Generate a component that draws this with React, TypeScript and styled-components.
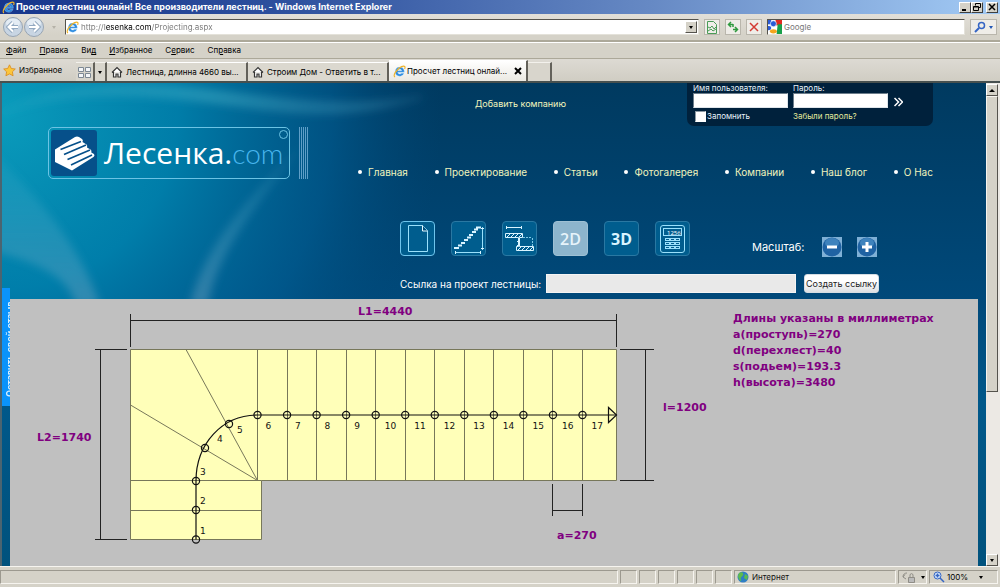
import React from "react";
import styled, { createGlobalStyle, css } from "styled-components";

const ui = 'Inter, "Liberation Sans", sans-serif';
const wide = '"DejaVu Sans", sans-serif';

const GlobalStyle = createGlobalStyle`
  * { box-sizing: border-box; }
  body { margin: 0; background: #d5d2c8; font-family: ${ui}; font-size: 8px; color: #111; }
  button, input { font: inherit; margin: 0; }
  button { cursor: pointer; }
  svg { flex: none; }
`;

/* ---------- browser frame ---------- */

const Window = styled.div`
  display: flex;
  flex-direction: column;
  min-height: 100vh;
`;

const TitleBar = styled.header`
  display: flex;
  align-items: center;
  gap: 1px;
  height: 14px;
  padding: 0 2px;
  background: linear-gradient(90deg, #17368c 0%, #2f529f 30%, #6689c4 65%, #a3cbf5 100%);
  color: #fff;
`;

const Title = styled.h1`
  flex: 1;
  margin: 0;
  font-size: 9px;
  line-height: 14px;
  font-weight: bold;
  white-space: nowrap;
`;

const CaptionButton = styled.button<{ $gap?: boolean }>`
  display: grid;
  place-items: center;
  width: 12px;
  height: 11px;
  margin-left: ${(p) => (p.$gap ? 2 : -1)}px;
  padding: 0;
  border: 1px solid;
  border-color: #fff #404040 #404040 #fff;
  background: #d5d2c8;
`;

const Bar = styled.div<{ $h: number }>`
  display: flex;
  align-items: center;
  height: ${(p) => p.$h}px;
  border-bottom: 1px solid #aca899;
  box-shadow: 0 1px 0 #fff;
`;

const AddressBar = styled(Bar)`
  padding: 0 3px 0 2px;
  gap: 5px;
  border-bottom-width: 2px;
  background: linear-gradient(#e2dfd8, #d5d2c8 80%);
`;

const RoundButton = styled.button`
  width: 22px;
  height: 22px;
  margin-right: -6px;
  padding: 0;
  border: 0;
  background: none;
`;

const DropMark = styled.span`
  width: 0;
  height: 0;
  border: 2px solid transparent;
  border-top: 3px solid currentColor;
  border-bottom: 0;
`;

const History = styled.button`
  display: grid;
  place-items: center;
  width: 12px;
  height: 12px;
  margin-left: 4px;
  padding: 0;
  border: 0;
  background: none;
  color: #b5b2a8;
`;

const Field = styled.div<{ $grow?: boolean }>`
  display: flex;
  align-items: center;
  gap: 2px;
  ${(p) => (p.$grow ? "flex: 1;" : "width: 198px;")}
  min-width: 0;
  height: 16px;
  padding: 0 1px 0 0;
  border: 1px solid;
  border-color: #55534d #e4e2da #e4e2da #55534d;
  background: #fff;
`;

const Address = styled.input`
  flex: 1;
  min-width: 0;
  padding: 0;
  border: 0;
  outline: 0;
  line-height: 14px;
  background: linear-gradient(90deg, #777 24px, #000 24px, #000 71px, #777 71px);
  background-clip: text;
  -webkit-background-clip: text;
  -webkit-text-fill-color: transparent;
`;

const Search = styled.input`
  flex: 1;
  min-width: 0;
  padding: 0;
  border: 0;
  outline: 0;
  background: none;
  &::placeholder { color: #777; opacity: 1; }
`;

const ArrowButton = styled.button`
  display: grid;
  place-items: center;
  width: 12px;
  height: 12px;
  padding: 0;
  border: 1px solid;
  border-color: #fff #55534d #55534d #fff;
  background: #d5d2c8;
  color: #000;
`;

const IconButton = styled.button<{ $w?: number }>`
  display: flex;
  align-items: center;
  justify-content: space-evenly;
  width: ${(p) => p.$w ?? 16}px;
  height: 16px;
  padding: 0;
  border: 1px solid #b9b6ac;
  background: #efede8;
  color: #2257b5;
`;

const MenuBar = styled(Bar)`
  gap: 13px;
  padding-left: 6px;
`;

const MenuItem = styled.button`
  padding: 0;
  border: 0;
  background: none;
  line-height: 14px;
  color: #000;
`;

const TabBar = styled.div`
  display: flex;
  align-items: flex-end;
  height: 24px;
  padding-left: 3px;
  border-bottom: 2px solid #47504f;
  background: linear-gradient(#dddad3, #d0cdc3);
`;

const Favorites = styled.button`
  display: flex;
  align-items: center;
  gap: 3px;
  align-self: center;
  width: 73px;
  padding: 0;
  border: 0;
  background: none;
  color: #000;
  white-space: nowrap;
`;

const SmallTab = styled.button<{ $w: number }>`
  display: grid;
  place-items: center;
  width: ${(p) => p.$w}px;
  height: 19px;
  padding: 0;
  border: 0;
  border-top: 1px solid #f3f1ec;
  border-right: 2px solid #63615a;
  background: #d8d5cc;
  color: #000;
`;

const Tab = styled.button<{ $active?: boolean }>`
  display: flex;
  align-items: center;
  gap: ${(p) => (p.$active ? 1 : 3)}px;
  width: ${(p) => (p.$active ? 139 : 141)}px;
  height: ${(p) => (p.$active ? 21 : 19)}px;
  padding: 0 4px;
  border: 0;
  border-top: 1px solid #fff;
  border-right: 2px solid #63615a;
  background: ${(p) => (p.$active ? "linear-gradient(#fff, #ebe9e2)" : "#dbd8cf")};
  color: #000;
  white-space: nowrap;
`;

const TabTitle = styled.span`
  flex: 1;
  text-align: left;
`;

/* ---------- page ---------- */

const Viewport = styled.div`
  display: flex;
  flex: 1;
  border-left: 2px solid #4b6470;
`;

const Page = styled.main`
  position: relative;
  display: flex;
  flex-direction: column;
  flex: 1;
  min-width: 0;
  padding: 0 8px;
  background: linear-gradient(#003a60 0, #00497a 216px, #00588a 320px, #00527d);
`;

const Backdrop = styled.svg`
  position: absolute;
  top: 0;
  left: 0;
  width: 100%;
  height: 216px;
`;

const FeedbackTab = styled.a`
  position: absolute;
  left: 0;
  top: 205px;
  width: 8px;
  height: 118px;
  padding: 0 0 9px 2px;
  overflow: hidden;
  background: #0a93fb;
  color: #d8efff;
  text-decoration: none;
`;

const FeedbackText = styled.span`
  display: block;
  height: 109px;
  width: 12px;
  writing-mode: vertical-rl;
  transform: rotate(180deg);
  font-size: 9px;
  line-height: 12px;
  font-weight: bold;
  white-space: nowrap;
`;

const SiteHeader = styled.header`
  position: relative;
  display: flex;
  height: 216px;
  padding: 0 45px 0 38px;
`;

const Brand = styled.a`
  display: flex;
  flex: none;
  gap: 9px;
  width: 310px;
  height: 52px;
  margin-top: 44px;
  color: #fff;
  text-decoration: none;
`;

const LogoBox = styled.span`
  position: relative;
  display: flex;
  align-items: center;
  gap: 7px;
  width: 242px;
  padding-left: 2px;
  border: 1px solid #6cc3e4;
  border-radius: 5px;
  white-space: nowrap;
`;

const LogoName = styled.span`
  font-family: "Open Sans", sans-serif;
  font-size: 30px;
  line-height: 48px;
`;

const LogoDomain = styled.span`
  font-family: Lato, sans-serif;
  font-weight: 300;
  font-size: 28px;
  color: #49b6ee;
`;

const LogoRing = styled.span`
  position: absolute;
  top: 2px;
  right: 1px;
  width: 9px;
  height: 9px;
  border: 1px solid #6cc3e4;
  border-radius: 50%;
`;

const LogoStripes = styled.span`
  width: 9px;
  background: repeating-linear-gradient(90deg, #5f9fc8 0 1px, transparent 1px 2px);
`;

const HeaderMain = styled.div`
  display: flex;
  flex-direction: column;
  flex: 1;
  min-width: 0;
`;

const TopRow = styled.div`
  display: flex;
  align-items: flex-start;
  justify-content: space-between;
  padding-left: 117px;
`;

const AddCompany = styled.a`
  margin-top: 14px;
  color: #f2f5bd;
  font-size: 9px;
  line-height: 14px;
  text-decoration: none;
`;

const Login = styled.form`
  display: grid;
  grid-template-columns: 95px 95px 10px;
  column-gap: 5px;
  width: 246px;
  height: 43px;
  padding: 0 6px;
  align-content: start;
  border-radius: 0 0 7px 7px;
  background: #00213c;
  color: #e8f2fa;
`;

const LoginLabel = styled.label`
  line-height: 10px;
  white-space: nowrap;
`;

const LoginInput = styled.input`
  grid-row: 2;
  width: 95px;
  height: 15px;
  padding: 0 2px;
  border: 1px solid;
  border-color: #6b7d8b #dfe5ea #dfe5ea #6b7d8b;
  background: #fff;
`;

const LoginSubmit = styled.button`
  grid-row: 2;
  grid-column: 3;
  display: grid;
  place-items: end center;
  padding: 0;
  border: 0;
  background: none;
  color: #fff;
`;

const Remember = styled.label`
  grid-row: 3;
  display: flex;
  align-items: center;
  gap: 1px;
  padding-left: 2px;
  line-height: 16px;
`;

const Check = styled.input`
  appearance: none;
  width: 11px;
  height: 11px;
  border: 1px solid;
  border-color: #8c99a3 #fff #fff #8c99a3;
  background: #fff;
`;

const Forgot = styled.a`
  grid-row: 3;
  color: #e3ea9c;
  line-height: 16px;
  text-decoration: none;
`;

const Nav = styled.ul`
  display: flex;
  justify-content: space-between;
  margin: 38px 0 0;
  padding: 0;
  list-style: none;
`;

const NavItem = styled.li`
  display: flex;
  align-items: center;
  gap: 6px;
  white-space: nowrap;
  &::before {
    content: "";
    width: 4px;
    height: 4px;
    border-radius: 50%;
    background: #fff;
  }
`;

const NavLink = styled.a`
  color: #f0f4bd;
  font-size: 10px;
  line-height: 16px;
  text-decoration: none;
`;

const ToolRow = styled.div`
  display: flex;
  align-items: center;
  gap: 16px;
  margin-top: 40px;
  padding-left: 42px;
`;

const Tool = styled.button<{ $tone?: "bright" | "active" }>`
  display: grid;
  place-items: center;
  flex: none;
  width: 35px;
  height: 35px;
  padding: 0;
  border: 1px solid #2a78a2;
  border-radius: 4px;
  background: #005d8e;
  color: #d9f4ff;
  font-family: "Open Sans", sans-serif;
  font-size: 16px;
  font-weight: bold;
  ${(p) => p.$tone === "bright" && css`border: 1px solid #6fc4ec;`}
  ${(p) => p.$tone === "active" && css`
    border-color: #9ec0d4;
    background: #8db5cd;
    color: #e6f3fa;
    font-weight: 600;
  `}
`;

const Scale = styled.div`
  display: flex;
  align-items: center;
  gap: 15px;
  margin: 17px 0 0 46px;
  color: #fff;
`;

const ScaleLabel = styled.span`
  width: 55px;
  font-size: 11px;
`;

const ZoomButton = styled.button`
  width: 20px;
  height: 20px;
  padding: 0;
  border: 0;
  background: #7fb0d6;
`;

const LinkRow = styled.form`
  display: flex;
  align-items: center;
  gap: 4px;
  margin: 17px 0 0;
  padding-left: 42px;
`;

const LinkLabel = styled.label`
  width: 142px;
  color: #fff;
  font-size: 10px;
  white-space: nowrap;
`;

const LinkInput = styled.input`
  width: 250px;
  height: 19px;
  margin-right: 4px;
  border: 1px solid #f4f4f4;
  background: #e9e9e9;
`;

const CreateLink = styled.button`
  width: 75px;
  height: 19px;
  padding: 0;
  border: 1px solid #d5dde3;
  border-radius: 3px;
  background: linear-gradient(#fff 40%, #dcdfe2);
  color: #222;
  font-size: 9px;
  white-space: nowrap;
`;

const Canvas = styled.section`
  position: relative;
  display: flex;
  align-items: flex-start;
  flex: 1;
  background: #c0c0c0;
`;

const Drawing = styled.svg`
  flex: none;
  width: 723px;
  height: 267px;
  font-family: ${wide};
`;

const Legend = styled.div`
  margin-top: 12px;
  color: #800080;
  font-family: ${wide};
  font-size: 11px;
  line-height: 16px;
  font-weight: bold;
  white-space: nowrap;
`;

const Scrollbar = styled.div`
  display: flex;
  flex-direction: column;
  width: 14px;
  padding: 1px 2px 0 0;
  background: #ece9e4;
`;

const Thumb = styled.div`
  height: 296px;
  border: 1px solid;
  border-color: #f6f4ef #55534d #55534d #f6f4ef;
  background: #d5d2c8;
`;

const Track = styled.div`
  flex: 1;
`;

/* ---------- status bar ---------- */

const StatusBar = styled.footer`
  display: flex;
  align-items: stretch;
  gap: 2px;
  height: 21px;
  padding: 3px 2px 3px 0;
  border-top: 1px solid #f6f4ef;
`;

const Cell = styled.div<{ $w?: number }>`
  display: flex;
  align-items: center;
  gap: 3px;
  ${(p) => (p.$w ? `width: ${p.$w}px;` : "flex: 1;")}
  padding: 0 2px;
  border: 1px solid;
  border-color: #9c998f #f6f4ef #f6f4ef #9c998f;
  white-space: nowrap;
`;

const CellButton = styled.button`
  display: flex;
  flex: 1;
  align-items: center;
  gap: 2px;
  padding: 0 12px 0 1px;
  border: 0;
  background: none;
  color: #000;
`;

const LockButton = styled(CellButton)`
  gap: 6px;
  padding-right: 2px;
`;

const CellText = styled.span`
  flex: 1;
  text-align: left;
`;

/* ---------- icons ---------- */

const ExplorerIcon = () => (
  <svg width="13" height="13" viewBox="0 0 16 16" aria-hidden="true">
    <path
      d="M8.300 2.600a5.600 5.600 0 1 0 5.300 7.700h-3.100c-1.200 1.500-4.600 1.200-4.700-1.300h8.100c.3-3.600-2-6.400-5.600-6.400zM5.900 7.100c.3-2.400 4.500-2.400 4.800 0z"
      fill="#2d8be0" stroke="#bfe6ff" strokeWidth=".4" fillRule="evenodd" />
    <path d="M2.500 14.800C-.8 13.500 4 5 10.500 2c4-1.600 5 .2 3.800 2.800" fill="none" stroke="#f0b429" strokeWidth="1.400" />
  </svg>
);

const Round = ({ flip }: { flip?: boolean }) => {
  const arrow = flip ? "M6 11h9M11 6.500l4.500 4.500-4.500 4.500" : "M16 11H7M11 6.500L6.500 11l4.500 4.500";
  return (
    <svg width="22" height="22" viewBox="0 0 22 22" aria-hidden="true">
      <circle cx="11" cy="11" r="9.500" fill="#c8d5e3" stroke="#98a5b3" />
      <ellipse cx="11" cy="7" rx="7" ry="4.500" fill="#e4ecf4" />
      <path d={arrow} fill="none" stroke="#93a9c1" strokeWidth="4" />
      <path d={arrow} fill="none" stroke="#fff" strokeWidth="2" />
    </svg>
  );
};

const HouseIcon = () => (
  <svg width="12" height="12" viewBox="0 0 12 12" aria-hidden="true">
    <path d="M1 6.500L6 1.500l5 5M2.500 6v5h2.500V8h2v3h2.500V6" fill="#fff" stroke="#333" strokeWidth="1.200" />
  </svg>
);

const GoogleIcon = () => (
  <svg width="14" height="14" viewBox="0 0 13 13" aria-hidden="true">
    <path d="M0 0h13v13H0z" fill="#fff" />
    <path d="M0 0h3v4H0z" fill="#2a5bd7" />
    <path d="M7 0h6v5H7z" fill="#e02b20" />
    <path d="M9 4h4v9H8z" fill="#18a04a" />
    <circle cx="5" cy="3.500" r="2.800" fill="#2a5bd7" stroke="#fff" strokeWidth=".6" />
    <circle cx="1" cy="7.500" r="2" fill="#2a5bd7" />
    <ellipse cx="5" cy="10.500" rx="3.200" ry="2" fill="#f4a51c" />
  </svg>
);

const LogoMark = () => (
  <svg width="46" height="46" viewBox="0 0 46 46" aria-hidden="true">
    <rect width="46" height="46" rx="3" fill="#06508a" />
    <path d="M4 19.500L24 7q2-1.200 4 0l3 2q1.500 1.200.5 3l4 2.500q1.200 1.200.5 3l3.500 2q1.500 1.200.8 3l2.700 1.500q1.200 2-.5 3L21 40.500 4 32z" fill="#fff" />
    <path d="M9.500 19.500L30 11.500M13 24.500l22-9.500M16.500 29.500L39 20M20 35l21-10" stroke="#06508a" strokeWidth="1.700" fill="none" />
  </svg>
);

const PageIcon = () => (
  <svg width="33" height="33" viewBox="0 0 33 33" fill="none" stroke="#9be0fb" aria-hidden="true">
    <path d="M7.500 3.500h14l5 5v21h-19z" />
    <path d="M21.500 3.500v5.500h5" fill="#004e7c" stroke="#e6f9ff" />
  </svg>
);

const StairIcon = () => (
  <svg width="33" height="33" viewBox="0 0 33 33" fill="none" stroke="#d9f4ff" aria-hidden="true">
    <path d="M2 26h5M6 23.500h4M9 21h4M12 18h4M15 15.500h4M17 13h4M20 10h4M22 7.500h4M24 5.500h5" strokeWidth="2" />
    <path d="M3 30.500h26M30.500 5v23" stroke="#9be0fb" />
    <path d="M3.500 29v3M28.500 29v3M29 6.500h3M29 26.500h3" />
  </svg>
);

const SectionIcon = () => (
  <svg width="33" height="33" viewBox="0 0 33 33" fill="none" stroke="#d9f4ff" aria-hidden="true">
    <path d="M3 5.500h16M3.500 4v3M18.500 4v3" />
    <path d="M2.500 11.500h17v4h-3v9h14v4h-17v-4h2v-9h-13z" />
    <path d="M4 15l3-3M8 15l3-3M12 15l3-3M16 15l3-3M14 20l2-2M14 24l2-2M15 28l3-3M19 28l3-3M23 28l3-3M27 28l3-3" />
    <path d="M20 15.500h9M29.500 16v8" stroke="#7fc9e6" strokeDasharray="2 1" />
  </svg>
);

const CalculatorIcon = () => (
  <svg width="33" height="33" viewBox="0 0 33 33" fill="none" stroke="#9be0fb" aria-hidden="true">
    <rect x="4.500" y="3.500" width="24" height="27" rx="2.500" />
    <rect x="7.500" y="6.500" width="18" height="7" />
    <text x="11" y="13" fontSize="6" fill="#fff" stroke="none" fontWeight="normal">1256</text>
    {[16.5, 20.5, 24.5].map((y) =>
      [9.5, 14.5, 19.5].map((x) => <rect key={`${x}-${y}`} x={x} y={y} width="4" height="2" />),
    )}
  </svg>
);

const ZoomGlyph = ({ plus }: { plus?: boolean }) => (
  <svg width="20" height="20" viewBox="0 0 20 20" aria-hidden="true">
    <circle cx="10" cy="10" r="9.500" fill="#1f62a3" />
    <ellipse cx="10" cy="6" rx="7" ry="5" fill="#3f83bd" />
    <path d={plus ? "M5 10h10M10 5v10" : "M5 10h10"} stroke="#fff" strokeWidth="3" />
  </svg>
);

const Waves = () => (
  <Backdrop viewBox="0 0 984 216" preserveAspectRatio="none" aria-hidden="true">
    <defs>
      <radialGradient id="glow" gradientUnits="userSpaceOnUse" cx="0" cy="30" r="440">
        <stop offset="0" stopColor="#0a9cbc" />
        <stop offset=".4" stopColor="#0084b0" stopOpacity=".9" />
        <stop offset=".75" stopColor="#006096" stopOpacity=".6" />
        <stop offset="1" stopColor="#004a7a" stopOpacity="0" />
      </radialGradient>
      <linearGradient id="ray" x1="0" y1="0" x2="0" y2="1">
        <stop offset="0" stopColor="#5fc0d8" stopOpacity=".1" />
        <stop offset="1" stopColor="#7fa8c4" stopOpacity=".4" />
      </linearGradient>
      <linearGradient id="crest">
        <stop offset="0" stopColor="#4fb8cc" stopOpacity=".1" />
        <stop offset=".5" stopColor="#4fb8cc" stopOpacity=".35" />
        <stop offset="1" stopColor="#4fa0c0" stopOpacity=".15" />
      </linearGradient>
      <filter id="soft" x="-20%" y="-20%" width="140%" height="140%">
        <feGaussianBlur stdDeviation="4" />
      </filter>
    </defs>
    <path d="M0 0h984v216H0z" fill="url(#glow)" />
    <g filter="url(#soft)">
      <path d="M-8 70C30 110 75 155 98 222H74C66 192 35 180 -8 168z" fill="url(#ray)" />
      <path d="M300 62C240 120 202 165 188 222h18c8-48 40-90 94-160z" fill="url(#ray)" />
      <path d="M0 30C50 8 120 8 200 17S330 40 420 14C360 26 300 20 220 10S60-2 0 30z" fill="url(#crest)" stroke="url(#crest)" strokeWidth="4" />
    </g>
  </Backdrop>
);

/* ---------- staircase plan ---------- */

const LEFT = 120.5;
const RIGHT = 606.5;
const TOP = 50.5;
const FLIGHT_BOTTOM = 181.5;
const BOTTOM = 240.5;
const CORNER = 247.5;
const LOWER_RIGHT = 251.5;
const WALK_X = 186;
const WALK_Y = 116;
const treads = Array.from({ length: 12 }, (_, i) => CORNER + (i * 325) / 11);
const nodes = [
  [WALK_X, 240.5], [WALK_X, 211], [WALK_X, 182], [195, 149], [219, 125],
  ...treads.map((x) => [x, WALK_Y]),
];
const numbers = [
  [190, 235], [190, 205], [190, 176], [207, 143], [227, 134],
  ...treads.map((x, i) => [x + (i < 4 ? 8 : 9), 130]),
];

const StairPlan = () => (
  <Drawing viewBox="0 0 723 267" role="img" aria-label="План лестницы">
    <path
      d={`M${LEFT} ${TOP}H${RIGHT}V${FLIGHT_BOTTOM}H${LOWER_RIGHT}V${BOTTOM}H${LEFT}z`}
      fill="#ffffb9" stroke="#77775a" strokeWidth="1" />
    <g stroke="#77775a" strokeWidth="1" fill="none">
      {treads.map((x) => <path key={x} d={`M${Math.floor(x) + 0.5} ${TOP}V${FLIGHT_BOTTOM}`} />)}
      <path d={`M${LEFT} ${FLIGHT_BOTTOM}H${LOWER_RIGHT}M${LEFT} 211.500H${LOWER_RIGHT}`} />
      <path d={`M176 ${TOP}L${CORNER} ${FLIGHT_BOTTOM}L${LEFT} 106`} />
    </g>
    <g stroke="#222" strokeWidth="1" fill="none">
      <path d={`M${LEFT} 15V48M${RIGHT} 15V48M${LEFT} 21.500H${RIGHT}`} />
      <path d={`M85 ${TOP}h32M85 ${BOTTOM}h32M90.500 ${TOP}V${BOTTOM}`} />
      <path d={`M610 ${TOP}h34M610 ${FLIGHT_BOTTOM}h34M635.500 ${TOP}V${FLIGHT_BOTTOM}`} />
      <path d="M542.500 185v32M572.500 185v32M542.500 211.500h30" />
    </g>
    <g stroke="#111" strokeWidth="1.200" fill="none">
      <path d={`M${WALK_X} ${BOTTOM}V182C${WALK_X} 145 212 ${WALK_Y} ${CORNER} ${WALK_Y}H${RIGHT}`} />
      <path d="M598.500 108.500v15l8-7.500z" />
      {nodes.map(([x, y]) => <circle key={`${x}-${y}`} cx={x} cy={y} r="3.600" />)}
    </g>
    <g fontSize="9" fill="#111">
      {numbers.map(([x, y], i) => <text key={i} x={x} y={y}>{i + 1}</text>)}
    </g>
    <g fontSize="11" fontWeight="bold" fill="#800080">
      <text x="348" y="16">L1=4440</text>
      <text x="27" y="142">L2=1740</text>
      <text x="653" y="112">l=1200</text>
      <text x="547" y="240">a=270</text>
    </g>
  </Drawing>
);

/* ---------- application ---------- */

const menu = [["", "Ф", "айл"], ["", "П", "равка"], ["Ви", "д", ""], ["", "И", "збранное"], ["С", "е", "рвис"], ["Сп", "р", "авка"]];
const links = ["Главная", "Проектирование", "Статьи", "Фотогалерея", "Компании", "Наш блог", "О Нас"];
const legend = ["Длины указаны в миллиметрах", "a(проступь)=270", "d(перехлест)=40", "s(подьем)=193.3", "h(высота)=3480"];

export default function App() {
  return (
    <Window>
      <GlobalStyle />
      <TitleBar>
        <ExplorerIcon />
        <Title>Просчет лестниц онлайн! Все производители лестниц. - Windows Internet Explorer</Title>
        <CaptionButton aria-label="Свернуть">
          <svg width="8" height="8"><path d="M1 7h4" stroke="#000" strokeWidth="2" /></svg>
        </CaptionButton>
        <CaptionButton aria-label="Восстановить">
          <svg width="8" height="8" fill="none" stroke="#000"><path d="M2.500 2.500V.5h5v4H6M.5 3.500h5v4h-5zM.5 4h5" /></svg>
        </CaptionButton>
        <CaptionButton $gap aria-label="Закрыть">
          <svg width="8" height="8"><path d="M1 1l6 6M7 1L1 7" stroke="#000" strokeWidth="1.500" /></svg>
        </CaptionButton>
      </TitleBar>

      <AddressBar $h={28}>
        <RoundButton aria-label="Назад"><Round /></RoundButton>
        <RoundButton aria-label="Вперед"><Round flip /></RoundButton>
        <History aria-label="Журнал"><DropMark /></History>
        <Field $grow>
          <ExplorerIcon />
          <Address aria-label="Адрес" defaultValue="http://lesenka.com/Projecting.aspx" />
          <ArrowButton aria-label="Показать адреса"><DropMark /></ArrowButton>
        </Field>
        <IconButton aria-label="Совместимость">
          <svg width="12" height="13" fill="none" stroke="#4a9c57"><path d="M1.500.5h6l3 3v9h-9zM2 6l2 1 2-2 2 3 2-2M2 10l3-2 2 2 3-2" /></svg>
        </IconButton>
        <IconButton aria-label="Обновить">
          <svg width="12" height="12" fill="none" stroke="#2f9a3f" strokeWidth="1.500"><path d="M6 3.500H2M4 1L1.500 3.500 4 6M6 3v3M6 8.500h4M8 6l2.500 2.500L8 11" /></svg>
        </IconButton>
        <IconButton aria-label="Остановить">
          <svg width="10" height="10"><path d="M1 1l8 8M9 1L1 9" stroke="#d33a33" strokeWidth="1.500" /></svg>
        </IconButton>
        <Field>
          <GoogleIcon />
          <Search aria-label="Поиск" placeholder="Google" />
        </Field>
        <IconButton $w={27} aria-label="Найти">
          <svg width="12" height="12" fill="none" stroke="#3565c4" strokeWidth="1.500"><circle cx="7.500" cy="4.500" r="3" /><path d="M5 7l-4 4" strokeWidth="2" /></svg>
          <DropMark />
        </IconButton>
      </AddressBar>

      <MenuBar $h={17}>
        {menu.map(([a, b, c]) => <MenuItem key={a + b + c}>{a}<u>{b}</u>{c}</MenuItem>)}
      </MenuBar>

      <TabBar>
        <Favorites>
          <svg width="13" height="13" viewBox="0 0 13 13"><path d="M6.500.8l1.800 3.700 4 .5-2.900 2.800.7 4-3.600-1.900-3.600 1.900.7-4L.7 5l4-.5z" fill="#fcc63b" stroke="#d98a1c" strokeWidth=".8" /></svg>
          Избранное
        </Favorites>
        <SmallTab $w={19} aria-label="Быстрые вкладки">
          <svg width="13" height="11" fill="#f4f6f8" stroke="#7d8894"><path d="M.5.5h5v4h-5zM7.500.5h5v4h-5zM.5 6.500h5v4h-5zM7.500 6.500h5v4h-5z" /></svg>
        </SmallTab>
        <SmallTab $w={12} aria-label="Список вкладок"><DropMark /></SmallTab>
        <Tab><HouseIcon /><TabTitle>Лестница, длинна 4660 вы...</TabTitle></Tab>
        <Tab><HouseIcon /><TabTitle>Строим Дом - Ответить в т...</TabTitle></Tab>
        <Tab $active>
          <ExplorerIcon /><TabTitle>Просчет лестниц онлай...</TabTitle>
          <svg width="8" height="8"><path d="M1 1l6 6M7 1L1 7" stroke="#000" strokeWidth="2" /></svg>
        </Tab>
        <SmallTab $w={24} aria-label="Новая вкладка" />
      </TabBar>

      <Viewport>
        <Page>
          <Waves />
          <SiteHeader>
            <Brand href="#" aria-label="Лесенка.com">
              <LogoBox>
                <LogoMark />
                <LogoName>Лесенка.<LogoDomain>com</LogoDomain></LogoName>
                <LogoRing />
              </LogoBox>
              <LogoStripes />
            </Brand>
            <HeaderMain>
              <TopRow>
                <AddCompany href="#">Добавить компанию</AddCompany>
                <Login onSubmit={(e) => e.preventDefault()}>
                  <LoginLabel htmlFor="user">Имя пользователя:</LoginLabel>
                  <LoginLabel htmlFor="pass">Пароль:</LoginLabel>
                  <LoginInput id="user" />
                  <LoginInput id="pass" type="password" />
                  <LoginSubmit aria-label="Войти">
                    <svg width="9" height="12" fill="none" stroke="#fff" strokeWidth="1.500"><path d="M.5 2l4 4-4 4M4.500 2l4 4-4 4" /></svg>
                  </LoginSubmit>
                  <Remember><Check type="checkbox" />Запомнить</Remember>
                  <Forgot href="#">Забыли пароль?</Forgot>
                </Login>
              </TopRow>
              <Nav>
                {links.map((l) => <NavItem key={l}><NavLink href="#">{l}</NavLink></NavItem>)}
              </Nav>
              <ToolRow>
                <Tool $tone="bright" aria-label="Новый проект"><PageIcon /></Tool>
                <Tool aria-label="Лестница"><StairIcon /></Tool>
                <Tool aria-label="Перекрытие"><SectionIcon /></Tool>
                <Tool $tone="active">2D</Tool>
                <Tool>3D</Tool>
                <Tool aria-label="Расчет"><CalculatorIcon /></Tool>
                <Scale>
                  <ScaleLabel>Масштаб:</ScaleLabel>
                  <ZoomButton aria-label="Уменьшить"><ZoomGlyph /></ZoomButton>
                  <ZoomButton aria-label="Увеличить"><ZoomGlyph plus /></ZoomButton>
                </Scale>
              </ToolRow>
              <LinkRow onSubmit={(e) => e.preventDefault()}>
                <LinkLabel htmlFor="link">Ссылка на проект лестницы:</LinkLabel>
                <LinkInput id="link" />
                <CreateLink>Создать ссылку</CreateLink>
              </LinkRow>
            </HeaderMain>
          </SiteHeader>
          <Canvas>
            <StairPlan />
            <Legend>{legend.map((l) => <div key={l}>{l}</div>)}</Legend>
          </Canvas>
          <FeedbackTab href="#"><FeedbackText>Оставить свой отзыв</FeedbackText></FeedbackTab>
        </Page>
        <Scrollbar>
          <ArrowButton aria-label="Вверх">
            <svg width="6" height="4"><path d="M0 4l3-3 3 3z" /></svg>
          </ArrowButton>
          <Thumb />
          <Track />
          <ArrowButton aria-label="Вниз"><DropMark /></ArrowButton>
        </Scrollbar>
      </Viewport>

      <StatusBar>
        <Cell />
        {[0, 1, 2, 3, 4, 5].map((i) => <Cell key={i} $w={17} />)}
        <Cell $w={162}>
          <svg width="12" height="12" viewBox="0 0 12 12"><circle cx="6" cy="6" r="5.500" fill="#2f7fc4" /><path d="M2 2c3-2 5 0 4 2S3 6 4 9 1 8 1 5zM8 3l3 2-1 4-3-2z" fill="#5dbb4c" /></svg>
          Интернет
        </Cell>
        <Cell $w={29}>
          <LockButton aria-label="Защищенный режим">
            <svg width="13" height="12" fill="none" stroke="#8f8d86"><path d="M1 6c0-3 2-4 4-4M3 3.500L1 6l3 2M8 6V3.500a2 2 0 013 0V6" /><path d="M6.500 6.500h6v5h-6z" fill="#bbb" /></svg>
            <DropMark />
          </LockButton>
        </Cell>
        <Cell $w={69}>
          <CellButton>
            <svg width="12" height="12" fill="none" stroke="#3565c4"><circle cx="4.500" cy="4.500" r="3.500" fill="#d7e8fb" /><path d="M2.500 4.500h4M4.500 2.500v4M7 7l4 4" strokeWidth="1.500" /></svg>
            <CellText>100%</CellText>
            <DropMark />
          </CellButton>
        </Cell>
      </StatusBar>
    </Window>
  );
}
